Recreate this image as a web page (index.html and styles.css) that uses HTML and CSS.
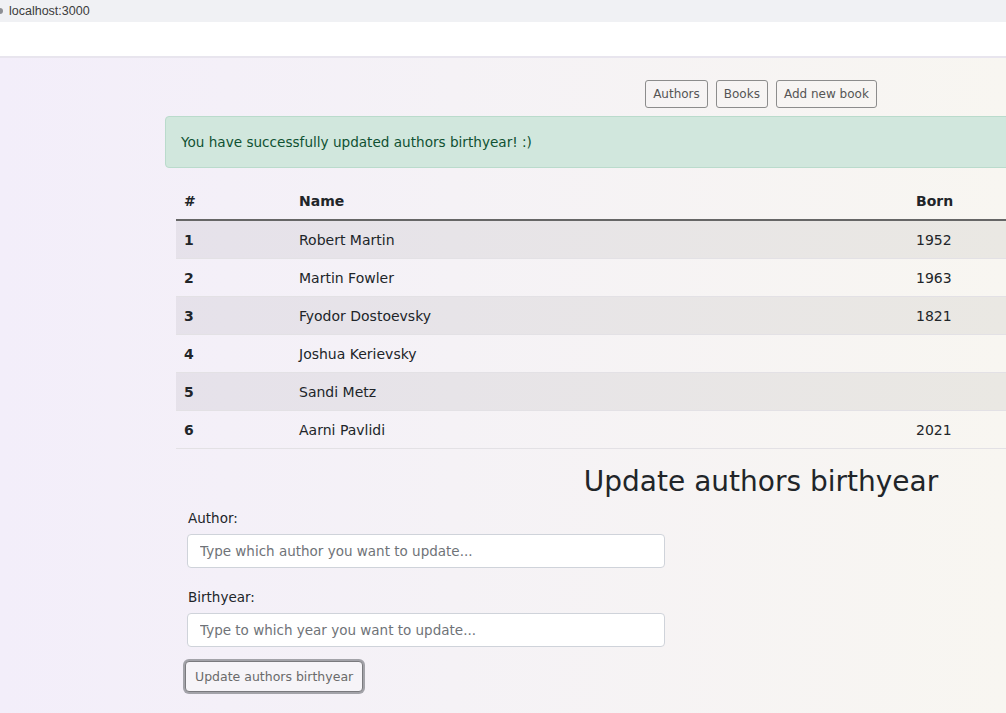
FILE: index.html
```html
<!DOCTYPE html>
<html lang="en">
<head>
<meta charset="utf-8">
<title>Authors</title>
<link rel="stylesheet" href="styles.css">
</head>
<body>
<div class="chrome"><span class="dot"></span><span class="url">localhost:3000</span></div>
<div class="toolbar"></div>
<main class="page">
  <div class="container">
    <nav class="nav">
      <button class="nav-btn">Authors</button>
      <button class="nav-btn">Books</button>
      <button class="nav-btn">Add new book</button>
    </nav>
    <div class="alert">You have successfully updated authors birthyear! :)</div>
    <table class="table">
      <thead>
        <tr><th class="c-num">#</th><th class="c-name">Name</th><th class="c-born">Born</th></tr>
      </thead>
      <tbody>
        <tr><th>1</th><td>Robert Martin</td><td>1952</td></tr>
        <tr><th>2</th><td>Martin Fowler</td><td>1963</td></tr>
        <tr><th>3</th><td>Fyodor Dostoevsky</td><td>1821</td></tr>
        <tr><th>4</th><td>Joshua Kerievsky</td><td></td></tr>
        <tr><th>5</th><td>Sandi Metz</td><td></td></tr>
        <tr><th>6</th><td>Aarni Pavlidi</td><td>2021</td></tr>
      </tbody>
    </table>
    <h2 class="title">Update authors birthyear</h2>
    <form class="form">
      <label class="label" for="author">Author:</label>
      <input class="input" id="author" type="text" placeholder="Type which author you want to update...">
      <label class="label label-second" for="year">Birthyear:</label>
      <input class="input" id="year" type="text" placeholder="Type to which year you want to update...">
      <button class="submit" type="button">Update authors birthyear</button>
    </form>
  </div>
</main>
</body>
</html>
```
FILE: styles.css
```css
html, body {
  margin: 0;
  padding: 0;
  overflow: hidden;
  height: 100%;
}

body {
  font-family: "Comic Sans MS", "DejaVu Sans", sans-serif;
  color: #212529;
  background: #f5f2f6;
}

.chrome {
  height: 22px;
  background: #f0f1f4;
  display: flex;
  align-items: center;
  font-family: "Liberation Sans", Arial, sans-serif;
  font-size: 12.5px;
  color: #3c3c3c;
}

.dot {
  width: 6px;
  height: 6px;
  margin-left: -3px;
  margin-right: 6px;
  border-radius: 50%;
  background: #8d8f94;
}

.toolbar {
  height: 34px;
  background: #ffffff;
  border-bottom: 2px solid #e8e5ee;
}

.page {
  height: 655px;
  background: linear-gradient(to right, #f3eefa 0%, #f5f2f6 45%, #f8f6f1 100%);
}

.container {
  margin-left: 165px;
  width: 1192px;
  padding-top: 22px;
}

.nav {
  display: flex;
  justify-content: center;
  gap: 8px;
  height: 28px;
}

.nav-btn {
  font-family: inherit;
  font-size: 12px;
  color: #555;
  background: transparent;
  border: 1px solid #8c8c8c;
  border-radius: 3px;
  padding: 0 7px;
  height: 28px;
}

.alert {
  margin-top: 8px;
  box-sizing: border-box;
  height: 52px;
  display: flex;
  align-items: center;
  padding-left: 15px;
  background: #d1e7dd;
  border: 1px solid #badbcc;
  border-radius: 4px;
  color: #0f5132;
  font-size: 13.6px;
}

.table {
  margin: 15px 11px 0;
  width: 1170px;
  border-collapse: collapse;
  font-size: 14px;
}

.table th, .table td {
  text-align: left;
  padding: 0 8px;
  height: 37px;
  border-bottom: 1px solid #e3e1e5;
}

.table th {
  font-weight: bold;
}

.table thead th {
  height: 36px;
  border-bottom: 2px solid #666;
}

.c-num { width: 99px; }
.c-name { width: 601px; }

.table tbody tr:nth-child(odd) {
  background: rgba(0, 0, 0, 0.055);
}

.table td {
  font-weight: normal;
}

.title {
  margin: 16px 0 0;
  text-align: center;
  font-weight: normal;
  font-size: 28px;
  line-height: 34px;
}

.form {
  margin-left: 22px;
  width: 478px;
  display: flex;
  flex-direction: column;
  align-items: flex-start;
  padding-top: 9px;
}

.label {
  font-size: 13.5px;
  margin-left: 1px;
  line-height: 20px;
  margin-bottom: 6px;
}

.label-second {
  margin-top: 19px;
}

.input {
  box-sizing: border-box;
  width: 478px;
  height: 34px;
  border: 1px solid #cfd3da;
  border-radius: 4px;
  background: #fff;
  padding: 0 12px;
  font-family: inherit;
  font-size: 13.5px;
}

.input::placeholder {
  color: #6f7378;
}

.submit {
  margin-top: 14px;
  margin-left: -2px;
  height: 31px;
  padding: 0 9px;
  font-family: inherit;
  font-size: 12.5px;
  color: #6a6a6a;
  background: #f6f4f8;
  border: 1px solid #7a7a7e;
  border-radius: 4px;
  box-shadow: 0 0 0 2px #a3a3a9;
}
```
